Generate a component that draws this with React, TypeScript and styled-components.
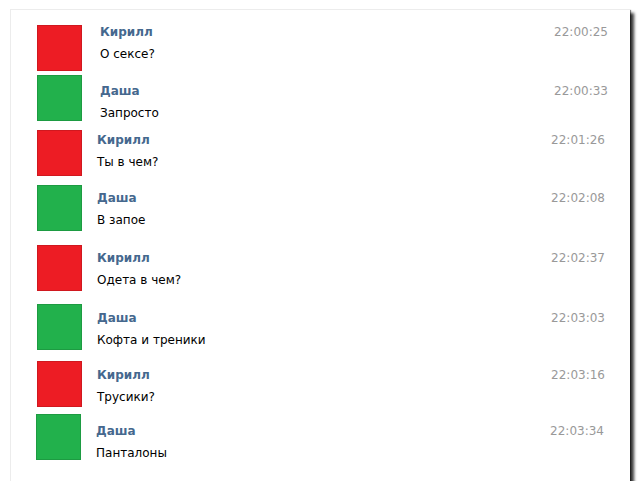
import React from "react";
import styled, { createGlobalStyle } from "styled-components";

const Global = createGlobalStyle`
  html, body { margin: 0; padding: 0; background: #ffffff; }
  body { font-family: "DejaVu Sans", Verdana, sans-serif; }
`;

const Card = styled.div`
  box-sizing: border-box;
  margin: 9px 0 0 10px;
  width: 620px;
  height: 472px;
  background: #ffffff;
  border-left: 1px solid #ececec;
  border-top: 1px solid #ececec;
  box-shadow: 4px 4px 3px rgba(0, 0, 0, 0.78), 1px 1px 1px rgba(0, 0, 0, 0.45);
  padding-top: 15px;
  display: flex;
  flex-direction: column;
`;

const Row = styled.div<{ $gap: number; $shift: number; $right: number }>`
  display: flex;
  align-items: flex-start;
  margin-top: ${(p) => p.$gap}px;
  padding-left: ${(p) => 26 - p.$shift}px;
  padding-right: ${(p) => p.$right}px;
`;

const Avatar = styled.div<{ $color: string }>`
  flex: none;
  box-sizing: border-box;
  width: 45px;
  height: 46px;
  background: ${(p) => p.$color};
  border: 1px solid rgba(0, 0, 0, 0.12);
`;

const Content = styled.div<{ $offset: number; $indent: number }>`
  flex: 1;
  margin-top: ${(p) => p.$offset}px;
  margin-left: ${(p) => p.$indent}px;
  display: flex;
  flex-direction: column;
`;

const Header = styled.div`
  display: flex;
  justify-content: space-between;
  align-items: flex-start;
  height: 22px;
`;

const Name = styled.span`
  font-size: 12px;
  line-height: 14px;
  font-weight: bold;
  color: #45688e;
`;

const Time = styled.span`
  font-size: 12px;
  line-height: 14px;
  color: #999999;
`;

const Message = styled.div`
  font-size: 12px;
  line-height: 14px;
  color: #000000;
`;

const RED = "#ed1c24";
const GREEN = "#22b14c";

type Msg = {
  who: "k" | "d";
  text: string;
  time: string;
  gap: number;
  offset: number;
  shift: number;
  right: number;
};

const messages: Msg[] = [
  { who: "k", text: "О сексе?", time: "22:00:25", gap: 0, offset: 0, shift: 0, right: 22 },
  { who: "d", text: "Запросто", time: "22:00:33", gap: 4, offset: 9, shift: 0, right: 22 },
  { who: "k", text: "Ты в чем?", time: "22:01:26", gap: 9, offset: 3, shift: 0, right: 25 },
  { who: "d", text: "В запое", time: "22:02:08", gap: 9, offset: 6, shift: 0, right: 25 },
  { who: "k", text: "Одета в чем?", time: "22:02:37", gap: 14, offset: 6, shift: 0, right: 25 },
  { who: "d", text: "Кофта и треники", time: "22:03:03", gap: 13, offset: 7, shift: 0, right: 25 },
  { who: "k", text: "Трусики?", time: "22:03:16", gap: 11, offset: 7, shift: 0, right: 25 },
  { who: "d", text: "Панталоны", time: "22:03:34", gap: 7, offset: 10, shift: 1, right: 26 },
];

export default function App() {
  return (
    <>
      <Global />
      <Card>
        {messages.map((m, i) => (
          <Row key={i} $gap={m.gap} $shift={m.shift} $right={m.right}>
            <Avatar $color={m.who === "k" ? RED : GREEN} />
            <Content $offset={m.offset} $indent={i < 2 ? 18 : 15}>
              <Header>
                <Name>{m.who === "k" ? "Кирилл" : "Даша"}</Name>
                <Time>{m.time}</Time>
              </Header>
              <Message>{m.text}</Message>
            </Content>
          </Row>
        ))}
      </Card>
    </>
  );
}
